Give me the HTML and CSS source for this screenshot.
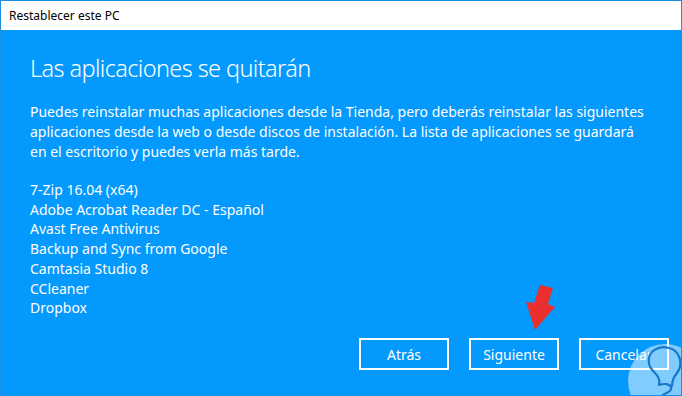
FILE: index.html
```html
<!DOCTYPE html>
<html lang="es">
<head>
    <meta charset="UTF-8">
    <meta name="viewport" content="width=device-width, initial-scale=1.0">
    <title>Restablecer este PC</title>
    <link rel="stylesheet" href="styles.css">
</head>
<body>
    <div class="window">
        <div class="titlebar">Restablecer este PC</div>
        <div class="content">
            <h1 class="heading">Las aplicaciones se quitarán</h1>
            <p class="intro">Puedes reinstalar muchas aplicaciones desde la Tienda, pero deberás reinstalar las siguientes<br>aplicaciones desde la web o desde discos de instalación. La lista de aplicaciones se guardará<br>en el escritorio y puedes verla más tarde.</p>
            <ul class="apps">
                <li>7-Zip 16.04 (x64)</li>
                <li>Adobe Acrobat Reader DC - Español</li>
                <li>Avast Free Antivirus</li>
                <li>Backup and Sync from Google</li>
                <li>Camtasia Studio 8</li>
                <li>CCleaner</li>
                <li>Dropbox</li>
            </ul>
            <div class="actions">
                <button class="btn">Atrás</button>
                <button class="btn">Siguiente</button>
                <button class="btn">Cancelar</button>
            </div>
        </div>

        <!-- red pointer over the "Siguiente" button -->
        <svg class="pointer" width="34" height="46" viewBox="0 0 34 46">
            <polygon points="16,0 29,3 24,19 31,22 11,45 2,17 10,18" fill="#e9302f"/>
        </svg>

        <!-- watermark -->
        <svg class="badge" width="80" height="60" viewBox="0 0 80 60">
            <circle cx="40" cy="40" r="37" fill="#ffffff" fill-opacity="0.5"/>
            <path d="M24 22 C22 10 34 4 44 7 C56 10 58 24 52 32 C48 37 47 41 47 45 M30 32 C26 28 24 25 24 22 M30 32 C34 36 35 40 34 44 M34 44 C40 42 47 43 46 48 C45 53 36 52 37 56 C38 59 45 58 49 56"
                  fill="none" stroke="#1877c9" stroke-width="2.2" stroke-linecap="round" stroke-linejoin="round"/>
        </svg>
    </div>
</body>
</html>
```

FILE: styles.css
```css
body, html {
    margin: 0;
    padding: 0;
}
.window {
    position: relative;
    width: 682px;
    height: 396px;
    box-sizing: border-box;
    border: 1px solid #1b8fe6;
    background-color: #0399fd;
    font-family: "Noto Sans", "Open Sans", sans-serif;
    color: #ffffff;
    overflow: hidden;
    display: flex;
    flex-direction: column;
}
.titlebar {
    height: 29px;
    background-color: #ffffff;
    color: #000000;
    font-size: 12px;
    line-height: 29px;
    padding-left: 8px;
}
.content {
    flex: 1;
    display: flex;
    flex-direction: column;
    padding: 0 12px 0 29px;
}
.heading {
    margin: 20px 0 0 0;
    font-size: 23.5px;
    font-weight: 300;
    letter-spacing: -0.6px;
    line-height: 36px;
}
.intro {
    margin: 16px 0 0 0;
    font-size: 14px;
    line-height: 20px;
}
.apps {
    list-style: none;
    margin: 18px 0 0 0;
    padding: 0;
    font-size: 14px;
    line-height: 19.7px;
}
.actions {
    margin-top: auto;
    margin-bottom: 25px;
    display: flex;
    justify-content: flex-end;
    gap: 20px;
}
.btn {
    width: 90px;
    height: 32px;
    box-sizing: border-box;
    border: 2px solid #ffffff;
    background: transparent;
    color: #ffffff;
    font-family: inherit;
    font-size: 14px;
    padding: 0;
}
.pointer {
    position: absolute;
    left: 523px;
    top: 284px;
}
.badge {
    position: absolute;
    left: 624px;
    top: 340px;
}
```
